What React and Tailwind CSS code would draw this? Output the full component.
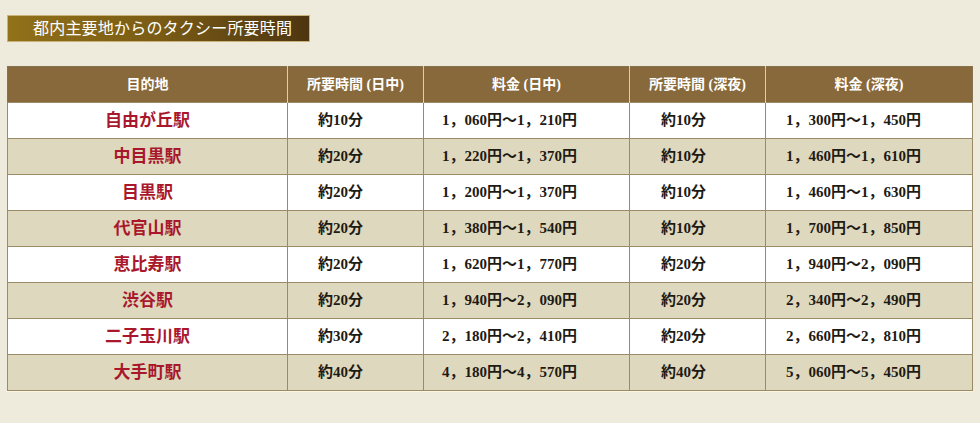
import React from 'react';

const rows = [
  ['自由が丘駅', '約10分', '1，060円～1，210円', '約10分', '1，300円～1，450円'],
  ['中目黒駅', '約20分', '1，220円～1，370円', '約10分', '1，460円～1，610円'],
  ['目黒駅', '約20分', '1，200円～1，370円', '約10分', '1，460円～1，630円'],
  ['代官山駅', '約20分', '1，380円～1，540円', '約10分', '1，700円～1，850円'],
  ['恵比寿駅', '約20分', '1，620円～1，770円', '約20分', '1，940円～2，090円'],
  ['渋谷駅', '約20分', '1，940円～2，090円', '約20分', '2，340円～2，490円'],
  ['二子玉川駅', '約30分', '2，180円～2，410円', '約20分', '2，660円～2，810円'],
  ['大手町駅', '約40分', '4，180円～4，570円', '約40分', '5，060円～5，450円'],
];

const font = { fontFamily: '"Liberation Serif", "Noto Sans CJK JP", serif' };

const App = () => {
  return (
    <div className="w-[980px] h-[423px] bg-[#eeebdc] overflow-hidden" style={font}>
      {/* Title */}
      <div className="pt-[15px] pl-[7px]">
        <div className="w-[303px] h-[27px] border border-[#c9b27a] bg-gradient-to-r from-[#917119] via-[#7a5c15] to-[#4d3510] text-white text-[16px] leading-[25px] pl-[25px] tracking-[0.2px]">
          都内主要地からのタクシー所要時間
        </div>
      </div>

      {/* Table */}
      <div className="pt-[24px] pl-[7px]">
        <table className="w-[965px] border-collapse border border-[#85734f] table-fixed">
          <colgroup>
            <col className="w-[280px]" />
            <col className="w-[136px]" />
            <col className="w-[206px]" />
            <col className="w-[136px]" />
            <col className="w-[207px]" />
          </colgroup>
          <thead>
            <tr className="h-[36px] bg-[#88693c] text-white text-[14px]">
              <th className="border-r border-[#d9d0b8] font-bold">目的地</th>
              <th className="border-r border-[#d9d0b8] font-bold">所要時間 (日中)</th>
              <th className="border-r border-[#d9d0b8] font-bold">料金 (日中)</th>
              <th className="border-r border-[#d9d0b8] font-bold">所要時間 (深夜)</th>
              <th className="font-bold">料金 (深夜)</th>
            </tr>
          </thead>
          <tbody>
            {rows.map((r, i) => (
              <tr
                key={i}
                className={`h-[36px] ${i % 2 === 0 ? 'bg-white' : 'bg-[#ded8be]'} text-[15px] font-bold text-[#1e1a14]`}
              >
                <td className="border border-[#9a8a66] text-center text-[17px] text-[#a8172c]">{r[0]}</td>
                <td className="border border-[#9a8a66] pl-[30px]">{r[1]}</td>
                <td className="border border-[#9a8a66] pl-[18px]">{r[2]}</td>
                <td className="border border-[#9a8a66] pl-[31px]">{r[3]}</td>
                <td className="border border-[#9a8a66] pl-[20px]">{r[4]}</td>
              </tr>
            ))}
          </tbody>
        </table>
        <div className="w-[967px] -ml-px h-px bg-[#fbf6e2]" />
      </div>
    </div>
  );
};

export default App;
